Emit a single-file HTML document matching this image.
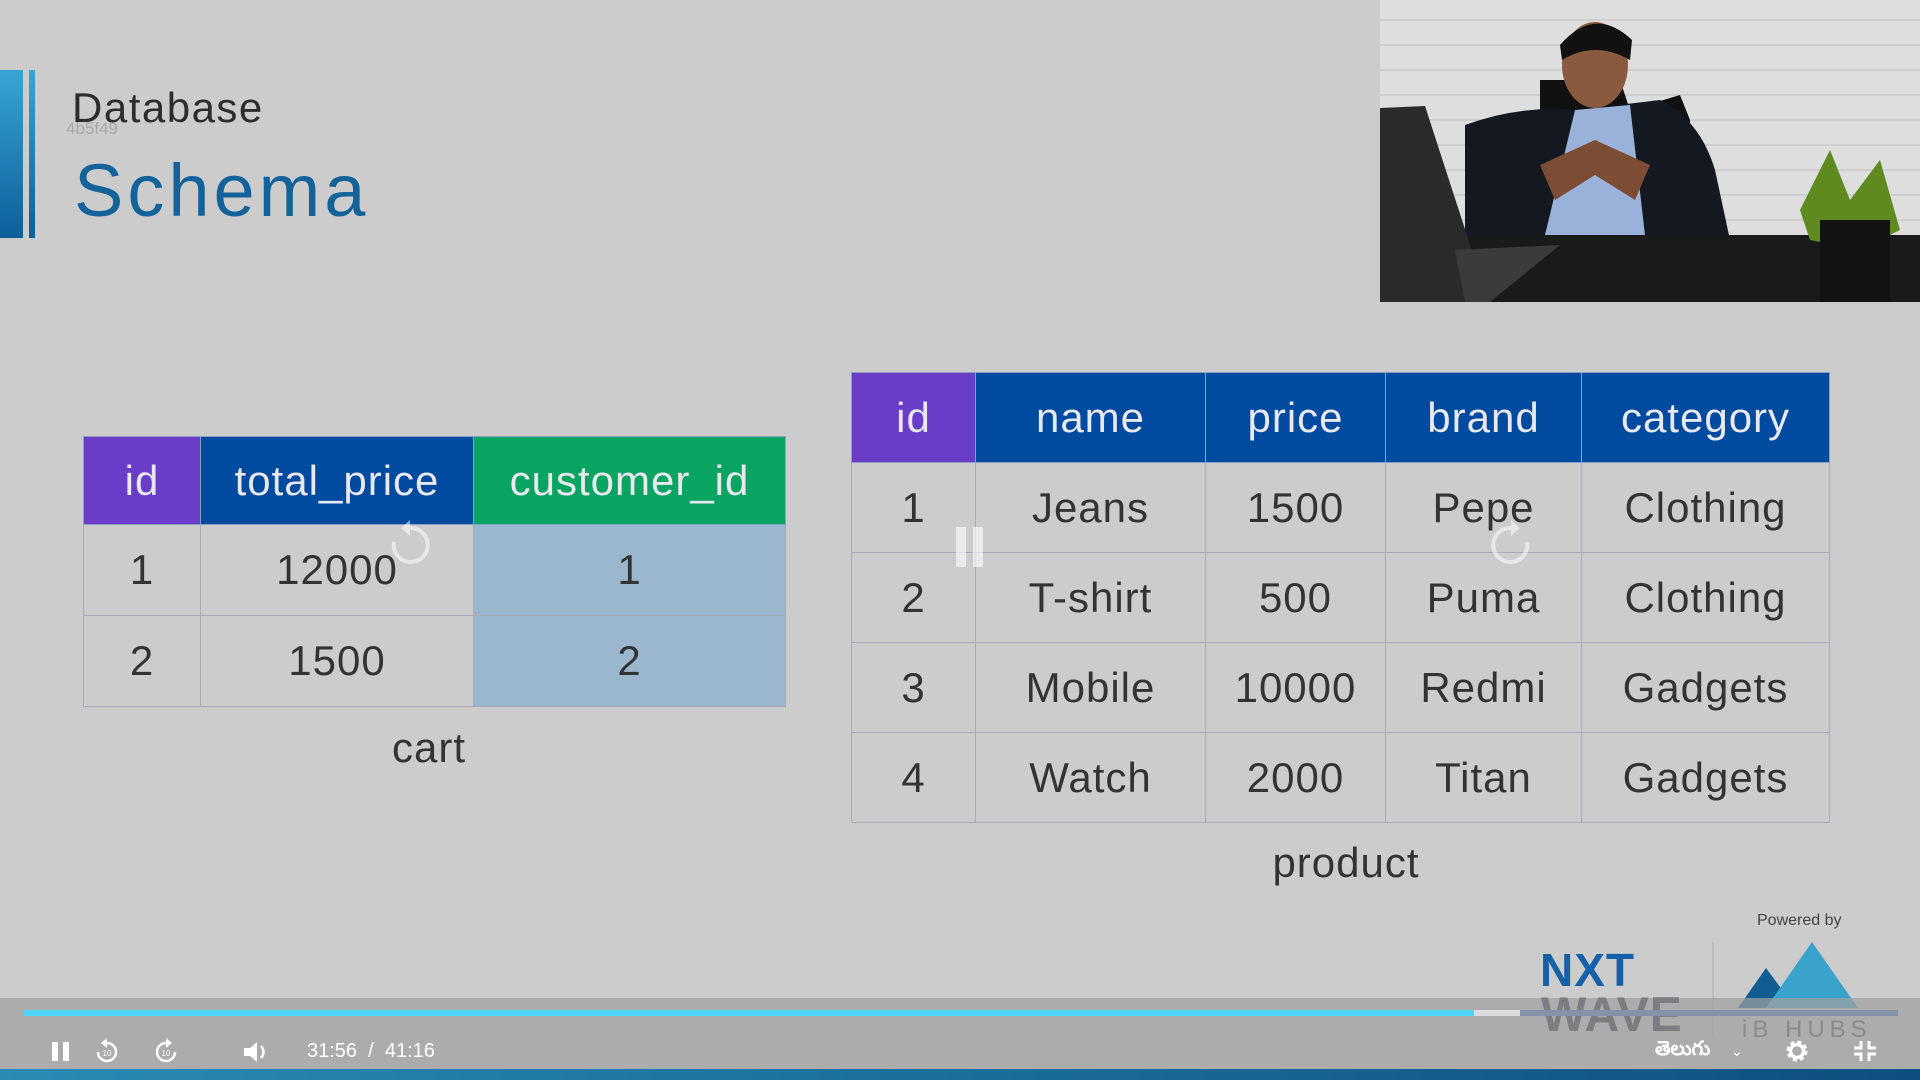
<!DOCTYPE html>
<html><head><meta charset="utf-8"><style>
*{margin:0;padding:0;box-sizing:border-box}
body{width:1920px;height:1080px;background:#cccccc;position:relative;overflow:hidden;font-family:"Liberation Sans",sans-serif}
.abs{position:absolute}
table{border-collapse:collapse;position:absolute;table-layout:fixed}
td,th{border:1.5px solid #a9a9b8;text-align:center;font-weight:normal;color:#333;font-size:42px;letter-spacing:1px}
th{color:#e8e8ee;border-color:#8f9fc0}
.pu{background:#6a3dc9}.bl{background:#004a9f}.gr{background:#0aa462}.lb{background:#9bb7cf}
.cap{font-size:42px;color:#333;text-align:center;letter-spacing:1px}
</style></head><body>
<div class="abs" style="left:0;top:70px;width:23px;height:168px;background:linear-gradient(#36a6d6,#0d5f9a)"></div>
<div class="abs" style="left:29px;top:70px;width:6px;height:168px;background:linear-gradient(#36a6d6,#0d5f9a)"></div>
<div class="abs" style="left:72px;top:84px;font-size:42px;color:#2d2d2d;letter-spacing:1.5px">Database</div>
<div class="abs" style="left:66px;top:119px;font-size:17px;color:#a8a8a8">4b5f49</div>
<div class="abs" style="left:74px;top:148px;font-size:74px;color:#13629a;letter-spacing:4px">Schema</div>

<svg class="abs" style="left:1380px;top:0" width="540" height="302" viewBox="0 0 540 302">
<rect width="540" height="302" fill="#dedede"/>
<g stroke="#c8c8c8" stroke-width="1.5">
<path d="M0 20H540M0 45H540M0 70H540M0 95H540M0 120H540M0 145H540M0 170H540M0 195H540M0 220H540"/>
</g>
<path d="M160 80 L240 80 L250 110 L300 95 L310 120 L310 230 L160 230Z" fill="#111"/>
<path d="M85 125 Q140 105 195 110 L280 100 Q320 120 335 170 L350 240 L85 240 Z" fill="#141820"/>
<path d="M195 110 L250 105 L265 235 L165 235 Z" fill="#9ab2d9"/>
<ellipse cx="215" cy="65" rx="33" ry="43" fill="#8a5a3e"/>
<path d="M180 45 Q215 5 252 40 L250 60 Q215 40 182 60Z" fill="#111"/>
<path d="M160 165 L215 140 L270 165 L255 200 L215 175 L175 200Z" fill="#7c4c35"/>
<rect x="0" y="235" width="540" height="67" fill="#1a1a1a"/>
<path d="M0 108 L45 106 L95 260 L95 302 L0 302Z" fill="#2a2a2a"/>
<path d="M75 250 L180 245 L110 302 L85 302Z" fill="#3b3b3b"/>
<path d="M420 210 L450 150 L470 200 L500 160 L520 230 L480 250 L430 240Z" fill="#5f8a20"/>
<rect x="440" y="220" width="70" height="82" fill="#121212"/>
</svg>

<table style="left:83px;top:436px;width:702px">
<colgroup><col style="width:117px"><col style="width:273px"><col style="width:312px"></colgroup>
<tr style="height:88px"><th class="pu">id</th><th class="bl">total_price</th><th class="gr">customer_id</th></tr>
<tr style="height:91px"><td>1</td><td>12000</td><td class="lb">1</td></tr>
<tr style="height:91px"><td>2</td><td>1500</td><td class="lb">2</td></tr>
</table>
<div class="abs cap" style="left:329px;top:724px;width:200px">cart</div>

<table style="left:851px;top:372px;width:978px">
<colgroup><col style="width:124px"><col style="width:230px"><col style="width:180px"><col style="width:196px"><col style="width:248px"></colgroup>
<tr style="height:90px"><th class="pu">id</th><th class="bl">name</th><th class="bl">price</th><th class="bl">brand</th><th class="bl">category</th></tr>
<tr style="height:90px"><td>1</td><td>Jeans</td><td>1500</td><td>Pepe</td><td>Clothing</td></tr>
<tr style="height:90px"><td>2</td><td>T-shirt</td><td>500</td><td>Puma</td><td>Clothing</td></tr>
<tr style="height:90px"><td>3</td><td>Mobile</td><td>10000</td><td>Redmi</td><td>Gadgets</td></tr>
<tr style="height:90px"><td>4</td><td>Watch</td><td>2000</td><td>Titan</td><td>Gadgets</td></tr>
</table>
<div class="abs cap" style="left:1246px;top:839px;width:200px">product</div>

<div class="abs" style="left:956px;top:527px;width:10px;height:40px;background:rgba(255,255,255,.6)"></div>
<div class="abs" style="left:973px;top:527px;width:10px;height:40px;background:rgba(255,255,255,.6)"></div>
<svg class="abs" style="left:385px;top:520px" width="50" height="50"><path d="M25 8 A17 17 0 1 1 9 22" fill="none" stroke="rgba(255,255,255,.55)" stroke-width="4"/><path d="M25 0 L16 8 L25 16Z" fill="rgba(255,255,255,.55)"/></svg>
<svg class="abs" style="left:1486px;top:520px" width="50" height="50"><path d="M25 8 A17 17 0 1 0 41 22" fill="none" stroke="rgba(255,255,255,.55)" stroke-width="4"/><path d="M25 0 L34 8 L25 16Z" fill="rgba(255,255,255,.55)"/></svg>

<div class="abs" style="left:1757px;top:912px;font-size:16px;color:#444">Powered by</div>
<div class="abs" style="left:1712px;top:942px;width:2px;height:95px;background:#bbb"></div>
<svg class="abs" style="left:1738px;top:940px" width="125" height="70"><path d="M0 68 L28 28 L48 55 L40 68Z" fill="#0f5d92"/><path d="M28 68 L74 2 L120 68Z" fill="#3aa3cb"/></svg>
<div class="abs" style="left:1742px;top:1016px;font-size:24px;color:#555;letter-spacing:5px">iB HUBS</div>
<div class="abs" style="left:1540px;top:943px;font-size:46px;font-weight:bold;color:#1560a8;letter-spacing:1px">NXT</div>
<div class="abs" style="left:1541px;top:988px;font-size:48px;font-weight:bold;color:#1d2435;letter-spacing:1px">WAVE</div>

<div class="abs" style="left:0;top:998px;width:1920px;height:72px;background:rgba(160,160,160,.72)"></div>
<div class="abs" style="left:24px;top:1010px;width:1450px;height:6px;background:#4fd5f5"></div>
<div class="abs" style="left:1474px;top:1010px;width:46px;height:6px;background:#dcdcdc"></div>
<div class="abs" style="left:1520px;top:1010px;width:378px;height:6px;background:#8592aa"></div>
<div class="abs" style="left:0;top:1069px;width:1920px;height:11px;background:linear-gradient(90deg,#2a8bb5,#0d4f80)"></div>
<div class="abs" style="left:52px;top:1042px;width:6px;height:19px;background:#fff"></div>
<div class="abs" style="left:63px;top:1042px;width:6px;height:19px;background:#fff"></div>
<svg class="abs" style="left:94px;top:1038px" width="26" height="26"><path d="M13 5 A9 9 0 1 1 4 14" fill="none" stroke="#fff" stroke-width="2.5"/><path d="M13 0 L7 5 L13 10Z" fill="#fff"/><text x="13" y="18" font-size="8" fill="#fff" text-anchor="middle" font-family="Liberation Sans">10</text></svg>
<svg class="abs" style="left:153px;top:1038px" width="26" height="26"><path d="M13 5 A9 9 0 1 0 22 14" fill="none" stroke="#fff" stroke-width="2.5"/><path d="M13 0 L19 5 L13 10Z" fill="#fff"/><text x="13" y="18" font-size="8" fill="#fff" text-anchor="middle" font-family="Liberation Sans">10</text></svg>
<svg class="abs" style="left:243px;top:1040px" width="28" height="24"><path d="M1 8 H7 L14 2 V22 L7 16 H1Z" fill="#fff"/><path d="M18 6 Q23 12 18 18" fill="none" stroke="#fff" stroke-width="2.5"/></svg>
<div class="abs" style="left:307px;top:1040px;font-size:20px;color:#fff">31:56&nbsp; /&nbsp; 41:16</div>
<div class="abs" style="left:1655px;top:1038px;font-size:20px;color:#fff;font-weight:bold">తెలుగు</div>
<div class="abs" style="left:1731px;top:1043px;font-size:14px;color:#fff">⌄</div>
<svg class="abs" style="left:1785px;top:1039px" width="24" height="24"><circle cx="12" cy="12" r="8" fill="none" stroke="#fff" stroke-width="5" stroke-dasharray="3.5 2.8"/><circle cx="12" cy="12" r="6.5" fill="none" stroke="#fff" stroke-width="3.5"/></svg>
<svg class="abs" style="left:1853px;top:1040px" width="24" height="22"><path d="M8 1 V8 H1 M16 1 V8 H23 M8 21 V14 H1 M16 21 V14 H23" fill="none" stroke="#fff" stroke-width="3"/></svg>
</body></html>
